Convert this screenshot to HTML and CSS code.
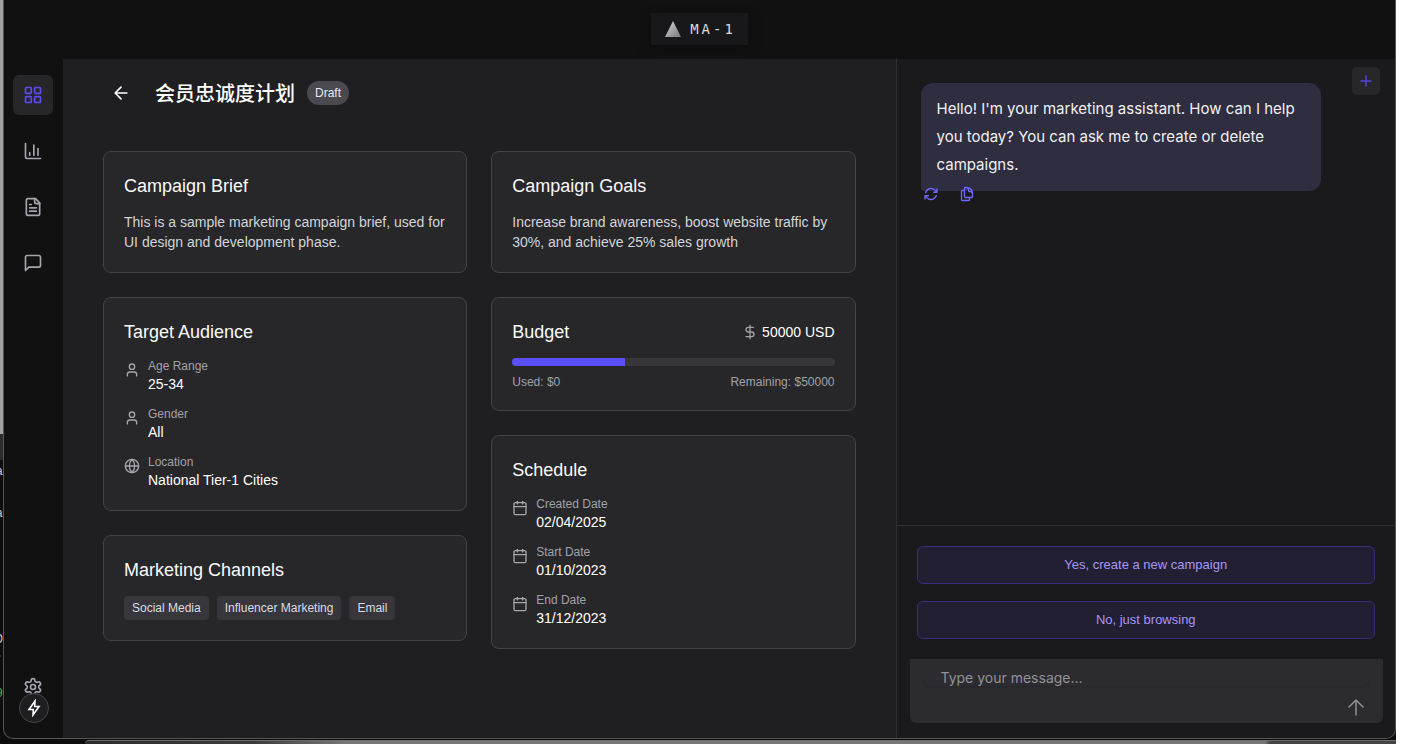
FILE: index.html
```html
<!DOCTYPE html>
<html lang="en">
<head>
<meta charset="utf-8">
<meta name="viewport" content="width=device-width, initial-scale=1">
<title>MA-1</title>
<link rel="stylesheet" href="styles.css">
</head>
<body>
<svg class="sprite" aria-hidden="true">
  <symbol id="user" viewBox="0 0 24 24"><path d="M19 21v-2a4 4 0 0 0-4-4H9a4 4 0 0 0-4 4v2"/><circle cx="12" cy="7" r="4"/></symbol>
  <symbol id="calendar" viewBox="0 0 24 24"><path d="M8 2v4M16 2v4M3 10h18"/><rect x="3" y="4" width="18" height="18" rx="2"/></symbol>
  <symbol id="globe" viewBox="0 0 24 24"><circle cx="12" cy="12" r="10"/><path d="M12 2a14.500 14.500 0 0 0 0 20 14.500 14.500 0 0 0 0-20M2 12h20"/></symbol>
</svg>
<div class="desktop">
  <div class="behind-left" aria-hidden="true">
    <div class="behind-pane"></div>
    <div class="terminal"><span>a</span><span>a</span><span class="t-gap">D</span><span class="t-dot">.</span><span class="t-green">9</span></div>
  </div>
  <div class="window">
    <header class="topbar">
      <div class="logo">
        <svg width="16" height="16" viewBox="0 0 16 16"><defs><linearGradient id="tri" x1="0" y1="0" x2="1" y2="1"><stop offset="0" stop-color="#d8d8da"/><stop offset="1" stop-color="#77777d"/></linearGradient></defs><path d="M8 0 16 16H0z" fill="url(#tri)"/></svg>
        <span>MA-1</span>
      </div>
    </header>
    <div class="body">
      <nav class="sidebar" aria-label="Main">
        <button class="nav active" aria-label="Dashboard"><svg class="icon i20" viewBox="0 0 24 24"><rect x="3" y="3" width="7" height="7" rx="1"/><rect x="14" y="3" width="7" height="7" rx="1"/><rect x="14" y="14" width="7" height="7" rx="1"/><rect x="3" y="14" width="7" height="7" rx="1"/></svg></button>
        <button class="nav" aria-label="Analytics"><svg class="icon i20" viewBox="0 0 24 24"><path d="M3 3v16a2 2 0 0 0 2 2h16M18 17V9M13 17V5M8 17v-3"/></svg></button>
        <button class="nav" aria-label="Documents"><svg class="icon i20" viewBox="0 0 24 24"><path d="M15 2H6a2 2 0 0 0-2 2v16a2 2 0 0 0 2 2h12a2 2 0 0 0 2-2V7z"/><path d="M14 2v4a2 2 0 0 0 2 2h4M10 9H8M16 13H8M16 17H8"/></svg></button>
        <button class="nav" aria-label="Messages"><svg class="icon i20" viewBox="0 0 24 24"><path d="M21 15a2 2 0 0 1-2 2H7l-4 4V5a2 2 0 0 1 2-2h14a2 2 0 0 1 2 2z"/></svg></button>
        <button class="nav settings" aria-label="Settings"><svg class="icon i20" viewBox="0 0 24 24"><path d="M12.220 2h-.44a2 2 0 0 0-2 2v.18a2 2 0 0 1-1 1.730l-.43.25a2 2 0 0 1-2 0l-.15-.08a2 2 0 0 0-2.730.73l-.22.38a2 2 0 0 0 .73 2.730l.15.1a2 2 0 0 1 1 1.720v.51a2 2 0 0 1-1 1.740l-.15.09a2 2 0 0 0-.73 2.730l.22.38a2 2 0 0 0 2.730.73l.15-.08a2 2 0 0 1 2 0l.43.25a2 2 0 0 1 1 1.730V20a2 2 0 0 0 2 2h.44a2 2 0 0 0 2-2v-.18a2 2 0 0 1 1-1.730l.43-.25a2 2 0 0 1 2 0l.15.08a2 2 0 0 0 2.730-.73l.22-.39a2 2 0 0 0-.73-2.730l-.15-.08a2 2 0 0 1-1-1.740v-.5a2 2 0 0 1 1-1.740l.15-.09a2 2 0 0 0 .73-2.730l-.22-.38a2 2 0 0 0-2.730-.73l-.15.08a2 2 0 0 1-2 0l-.43-.25a2 2 0 0 1-1-1.730V4a2 2 0 0 0-2-2z"/><circle cx="12" cy="12" r="3"/></svg></button>
        <button class="bolt" aria-label="Quick actions"><svg width="14" height="18" viewBox="0 0 14 18"><path d="M8 2 2 10.500H6.300L6 16 12 7.500H7.700z" fill="none" stroke="currentColor" stroke-width="1.600"/></svg></button>
      </nav>
      <main class="main">
        <div class="page-head">
          <button class="back" aria-label="Back"><svg class="icon i20" viewBox="0 0 24 24"><path d="m12 19-7-7 7-7M19 12H5"/></svg></button>
          <div class="title-row"><h1 lang="zh">会员忠诚度计划</h1><span class="badge">Draft</span></div>
        </div>
        <div class="columns">
          <div class="column">
            <section class="card"><h2>Campaign Brief</h2><p>This is a sample marketing campaign brief, used for UI design and development phase.</p></section>
            <section class="card"><h2>Target Audience</h2>
              <dl class="facts">
                <div class="fact"><svg class="icon i16"><use href="#user"/></svg><div><dt>Age Range</dt><dd>25-34</dd></div></div>
                <div class="fact"><svg class="icon i16"><use href="#user"/></svg><div><dt>Gender</dt><dd>All</dd></div></div>
                <div class="fact"><svg class="icon i16"><use href="#globe"/></svg><div><dt>Location</dt><dd>National Tier-1 Cities</dd></div></div>
              </dl>
            </section>
            <section class="card"><h2>Marketing Channels</h2>
              <ul class="tags"><li>Social Media</li><li>Influencer Marketing</li><li>Email</li></ul>
            </section>
          </div>
          <div class="column">
            <section class="card"><h2>Campaign Goals</h2><p>Increase brand awareness, boost website traffic by 30%, and achieve 25% sales growth</p></section>
            <section class="card">
              <div class="budget-head"><h2>Budget</h2><div class="amount"><svg class="icon i16" viewBox="0 0 24 24"><path d="M12 2v20M17 5H9.500a3.500 3.500 0 0 0 0 7h5a3.500 3.500 0 0 1 0 7H6"/></svg><span>50000 USD</span></div></div>
              <div class="bar"><div class="fill" style="width:35%"></div></div>
              <div class="bar-labels"><span>Used: $0</span><span>Remaining: $50000</span></div>
            </section>
            <section class="card"><h2>Schedule</h2>
              <dl class="facts">
                <div class="fact"><svg class="icon i16"><use href="#calendar"/></svg><div><dt>Created Date</dt><dd>02/04/2025</dd></div></div>
                <div class="fact"><svg class="icon i16"><use href="#calendar"/></svg><div><dt>Start Date</dt><dd>01/10/2023</dd></div></div>
                <div class="fact"><svg class="icon i16"><use href="#calendar"/></svg><div><dt>End Date</dt><dd>31/12/2023</dd></div></div>
              </dl>
            </section>
          </div>
        </div>
      </main>
      <aside class="chat" aria-label="Assistant">
        <button class="new-chat" aria-label="New chat"><svg class="icon" width="14" height="14" viewBox="0 0 14 14"><path d="M7 2v10M2 7h10"/></svg></button>
        <div class="messages">
          <div class="bubble">Hello! I'm your marketing assistant. How can I help you today? You can ask me to create or delete campaigns.</div>
          <div class="actions">
            <button aria-label="Regenerate"><svg class="icon i16" viewBox="0 0 24 24"><path d="M16.023 9.348h4.992v-.001M2.985 19.644v-4.992m0 0h4.992m-4.993 0l3.181 3.183a8.250 8.250 0 0013.803-3.700M4.031 9.865a8.250 8.250 0 0113.803-3.700l3.181 3.182m0-4.991v4.990"/></svg></button>
            <button aria-label="Copy"><svg class="icon i16" viewBox="0 0 24 24"><path d="M15.750 17.250v3.375c0 .621-.504 1.125-1.125 1.125h-9.750a1.125 1.125 0 01-1.125-1.125V7.875c0-.621.504-1.125 1.125-1.125H6.750a9.060 9.060 0 011.500.124m7.500 10.376h3.375c.621 0 1.125-.504 1.125-1.125V11.250c0-4.460-3.243-8.161-7.500-8.876a9.060 9.060 0 00-1.500-.124H9.375c-.621 0-1.125.504-1.125 1.125v3.500m7.500 10.375H9.375a1.125 1.125 0 01-1.125-1.125v-9.250m12 6.625v-1.875a3.375 3.375 0 00-3.375-3.375h-1.500a1.125 1.125 0 01-1.125-1.125v-1.500a3.375 3.375 0 00-3.375-3.375H9.750"/></svg></button>
          </div>
        </div>
        <div class="suggestions"><button>Yes, create a new campaign</button><button>No, just browsing</button></div>
        <form class="composer">
          <input type="text" placeholder="Type your message..." aria-label="Message">
          <button type="button" aria-label="Send"><svg class="icon" width="18" height="18" viewBox="0 0 18 18"><path d="M9 17V2M2 9l7-7 7 7"/></svg></button>
        </form>
      </aside>
    </div>
  </div>
</div>
</body>
</html>
```

FILE: styles.css
```css
* { box-sizing: border-box; }
body { margin: 0; background: #fff; color: #fff; font-family: "Liberation Sans", Arial, "Noto Sans CJK SC", sans-serif; font-size: 14px; line-height: 20px; }
h1, h2, p, dl, dd, ul { margin: 0; padding: 0; }
button, input { font: inherit; color: inherit; border: 0; padding: 0; background: none; }
button { display: flex; align-items: center; justify-content: center; cursor: pointer; }
.sprite { display: none; }
.icon { display: block; flex: none; fill: none; stroke: currentColor; stroke-width: 2; stroke-linecap: round; stroke-linejoin: round; }
.i16 { width: 16px; height: 16px; }
.i20 { width: 20px; height: 20px; }

/* Desktop and the windows behind the app */
.desktop { position: relative; display: flex; min-height: 100vh; margin-right: 12px; padding-bottom: 5px; background: #0d0d0e; overflow: hidden; }
.desktop::before { content: ""; position: absolute; left: 85px; right: 0; bottom: 0; height: 3px; border-top: 1px solid #6d6d6d; border-radius: 8px 0 0 0; background: linear-gradient(to right, #2c2c2c 0, #3c3c3c 170px, #777 260px, #777 1180px, #444 1185px); }
.behind-left { flex: none; width: 3px; display: flex; flex-direction: column; overflow: hidden; }
.behind-pane { flex: none; height: 460px; background: linear-gradient(#a2a2a2 434px, #2c2c2d 434px); }
.terminal { display: flex; flex-direction: column; align-items: flex-end; gap: 22px; padding-top: 2px; font: 12px/20px "Liberation Mono", monospace; color: #ccc; height: 0; }
.t-gap { margin-top: 84px; }
.t-dot { margin-top: -28px; }
.t-green { margin-top: -2px; color: #4cb53a; }

.window { position: relative; flex: 1; min-width: 0; display: flex; flex-direction: column; background: #111; border: 1px solid #555557; border-top: 0; border-radius: 0 0 10px 10px; overflow: hidden; }
.topbar { display: flex; justify-content: center; padding: 13px 0 14px; }
.logo { display: flex; align-items: center; gap: 9px; height: 32px; padding: 0 12px 0 14px; background: #18181a; box-shadow: 0 4px 12px #0e0e0e; font: 14px/20px "DejaVu Sans Mono", monospace; letter-spacing: 3px; color: #d9d9db; }
.body { flex: 1; display: grid; grid-template-columns: 59px minmax(0, 5fr) minmax(0, 3fr); }

.sidebar { position: relative; display: flex; flex-direction: column; gap: 16px; padding: 16px 10px 31px 9px; color: #a5a5ae; }
.nav { width: 40px; height: 40px; border-radius: 6px; }
.nav.active { background: #27272a; color: #5a4df4; }
.settings { margin-top: auto; }
.bolt { position: absolute; left: 15px; bottom: 15px; width: 30px; height: 30px; border: 1px solid #48484a; border-radius: 50%; background: #1e1e20; color: #fff; }

.main { padding: 16px 40px; background: #1f1f21; }
.page-head { display: flex; align-items: center; gap: 16px; margin-bottom: 40px; }
.back { width: 36px; height: 36px; }
.title-row { display: flex; align-items: center; gap: 12px; }
h1 { font: 500 20px/28px "Noto Sans CJK SC", sans-serif; }
.badge { padding: 2px 8px; border-radius: 12px; background: #4a4950; color: #e8e8ea; font-size: 12px; }
.columns { display: grid; grid-template-columns: repeat(2, minmax(0, 1fr)); gap: 24px; }
.column { display: flex; flex-direction: column; gap: 24px; }
.card { padding: 20px; border: 1px solid #444447; border-radius: 8px; background: #27272a; }
h2 { margin-bottom: 12px; font-size: 18px; line-height: 28px; font-weight: 400; color: #fafafa; }
.card p { color: #d4d4d8; }
.facts { display: flex; flex-direction: column; gap: 12px; }
.fact { display: flex; gap: 8px; }
.fact .icon { margin-top: 4px; color: #a5a5ae; }
dt { font-size: 12px; line-height: 16px; color: #a1a1aa; }
.tags { display: flex; flex-wrap: wrap; gap: 8px; list-style: none; }
.tags li { padding: 4px 8px; border-radius: 4px; background: #37363c; color: #dcdce0; font-size: 12px; line-height: 16px; }
.budget-head { display: flex; justify-content: space-between; margin-bottom: 12px; }
.budget-head h2 { margin: 0; }
.amount { display: flex; align-items: center; gap: 4px; }
.amount .icon { color: #a1a1aa; }
.bar { height: 8px; margin-bottom: 8px; border-radius: 4px; background: #37363a; overflow: hidden; }
.fill { height: 100%; background: #5b50f6; }
.bar-labels { display: flex; justify-content: space-between; font-size: 12px; line-height: 16px; color: #a1a1aa; }

.chat { position: relative; display: flex; flex-direction: column; background: #1a1a1d; border-left: 1px solid #2f2f32; }
.new-chat { position: absolute; top: 8px; right: 15px; width: 28px; height: 28px; border-radius: 5px; background: #27272a; color: #5145d8; }
.new-chat .icon { stroke-width: 1.5; }
.messages { flex: 1; padding: 24px; }
.bubble { width: 400px; max-width: 100%; padding: 12px 16px; border-radius: 12px 12px 12px 4px; background: #2f2d40; color: #f1f1f4; font: 15px/28px Inter, sans-serif; }
.actions { display: flex; gap: 20px; margin: -5px 0 0 2px; }
.actions button { width: 16px; height: 16px; color: #6f66ff; }
.actions .icon { stroke-width: 2; }
.suggestions { display: flex; flex-direction: column; gap: 17px; padding: 20px; border-top: 1px solid #2f2f33; }
.suggestions button { padding: 8px; border: 1px solid #372e80; border-radius: 6px; background: #221f33; color: #a597f5; font-size: 13px; }
.composer { display: flex; flex-direction: column; margin: 0 12px 15px 13px; padding: 0 13px 6px; border-radius: 0 0 6px 6px; background: #2c2b30; }
.composer input { height: 27px; padding: 10px 18px 0; border-radius: 0 0 8px 8px; box-shadow: 0 1px 1px #28272b; font: 14px/16px Inter, sans-serif; color: #eee; }
.composer input::placeholder { color: #929298; opacity: 1; }
.composer button { align-self: flex-end; width: 28px; height: 31px; padding-top: 10px; color: #929296; }
.composer .icon { stroke-width: 1.5; }
```
